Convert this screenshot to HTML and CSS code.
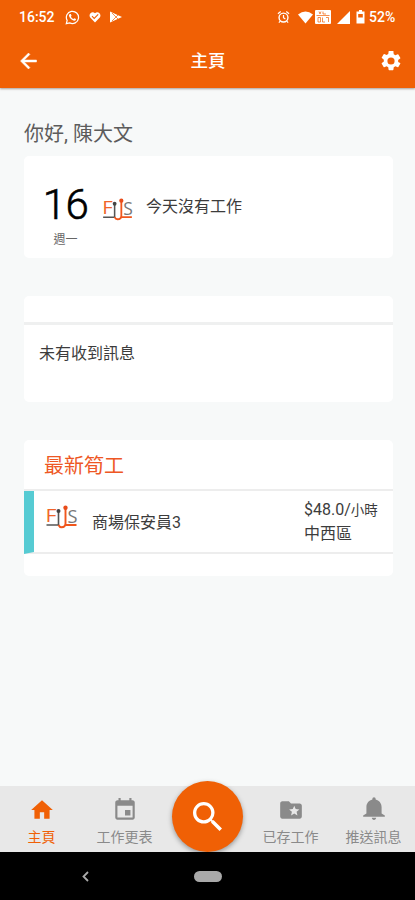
FILE: index.html
```html
<!DOCTYPE html>
<html lang="zh-Hant">
<head>
<meta charset="utf-8">
<meta name="viewport" content="width=device-width, initial-scale=1">
<title>主頁</title>
<link rel="stylesheet" href="styles.css">
</head>
<body>
<div class="screen">
  <header class="top">
    <div class="status">
      <span class="time">16:52</span>
      <svg class="whatsapp" viewBox="0 0 16 16"><path d="M1.4 14.6l.9-3.5A6.5 6.5 0 1 1 5 13.7z" fill="none" stroke="#fff" stroke-width="1.3"/><path d="M5.2 4.3l1 0 .8 1.9-.7.9q.9 1.7 2.7 2.5l.9-.9 1.9.9q0 1.6-1.7 1.8C7.500 11.500 4.300 8 4.200 5.900q.1-1.200 1-1.600z" fill="#fff"/></svg>
      <svg class="heart" viewBox="0 0 12 12"><path d="M6 11.500L1.200 6.400C-1 3.500 3-.7 6 2.200C9-.7 13 3.500 10.800 6.400z" fill="#fff"/><path d="M3 5.200l2.200 2.200 4-4" fill="none" stroke="#f06005" stroke-width="1.100"/></svg>
      <svg class="play" viewBox="0 0 12 12"><path d="M0 .5L12 6 0 11.500z" fill="#fff"/><path d="M2 2l6 6M2 10l6-6" stroke="#f06005" stroke-width=".7"/></svg>
      <span class="spacer"></span>
      <svg class="alarm" viewBox="0 0 14 14"><circle cx="7" cy="7.600" r="4.800" fill="none" stroke="#fff" stroke-width="1.500"/><path d="M1 3.500l3-2.500M13 3.500L10 1M7 4.800v3l2 1.400M3.500 11.500L2 13M10.500 11.500L12 13" fill="none" stroke="#fff" stroke-width="1.300"/></svg>
      <svg class="wifi" viewBox="0 0 15 13"><path d="M7.500 12.500L0 3.500Q7.500-2.500 15 3.500z" fill="#fff"/></svg>
      <svg class="volte" viewBox="0 0 16 14"><rect width="16" height="14" rx="1" fill="#fff"/><path d="M4 1.500l1 2.500L6 1.500M8 1.500v2.500h3M1.500 5.500h13M3 7.500v4.500h2.500V7.500zM7.500 7.500v4.500h2.500M11 7.500h2.500v4.500" fill="none" stroke="#f06005" stroke-width=".7"/></svg>
      <svg class="signal" viewBox="0 0 13 13"><path d="M13 0V13H0z" fill="#fff"/></svg>
      <svg class="battery" viewBox="0 0 9 14"><path d="M3 0h3v1.500h2.500v12H.5v-12H3z" fill="#fff"/><path d="M2.200 4h4.600v3.500H2.200z" fill="#f06005"/></svg>
      <span class="percent">52%</span>
    </div>
    <div class="bar">
      <svg class="back" viewBox="4 4 16 16"><path d="M20 11H7.830l5.590-5.590L12 4l-8 8 8 8 1.410-1.410L7.830 13H20z" fill="#fff" stroke="#fff" stroke-width=".5"/></svg>
      <h1>主頁</h1>
      <svg class="gear" viewBox="2 2 20 20"><path fill="#fff" d="M19.140 12.940c.04-.3.06-.61.06-.94s-.02-.64-.07-.94l2.030-1.580a.49.490 0 0 0 .12-.61l-1.920-3.320a.488.488 0 0 0-.59-.22l-2.390.96c-.5-.38-1.030-.7-1.620-.94l-.36-2.540A.484.484 0 0 0 13.920 2h-3.840c-.24 0-.43.170-.47.410l-.36 2.540c-.59.240-1.130.570-1.620.94l-2.390-.96a.488.488 0 0 0-.59.220L2.740 8.470a.48.480 0 0 0 .12.610l2.030 1.580c-.05.3-.09.630-.09.940s.02.640.07.940l-2.030 1.580a.49.490 0 0 0-.12.610l1.920 3.320c.12.220.370.290.59.220l2.390-.96c.5.380 1.030.7 1.620.94l.36 2.540c.05.240.24.410.48.410h3.840c.24 0 .44-.17.47-.41l.36-2.540c.59-.24 1.130-.56 1.620-.94l2.390.96c.22.080.47 0 .59-.22l1.920-3.320a.48.480 0 0 0-.12-.61zM12 15.600A3.600 3.600 0 1 1 12 8.400a3.600 3.600 0 0 1 0 7.200z"/></svg>
    </div>
  </header>

  <main>
    <p class="greeting">你好, 陳大文</p>
    <section class="card today">
      <div class="date"><span class="day">16</span><span class="weekday">週一</span></div>
      <svg class="logo" viewBox="0 0 32 24">
        <text x="0" y="17" font-size="18" textLength="11" lengthAdjust="spacingAndGlyphs" class="logo-f">F</text>
        <text x="22" y="17.500" font-size="18" textLength="10" lengthAdjust="spacingAndGlyphs" class="logo-s">S</text>
        <path d="M1 20H13V6" class="logo-dark"/><circle cx="13" cy="6" r="2" fill="#444"/>
        <path d="M13 20q1 2.200 3 2.200q4 0 4-4V3M20 20h11" class="logo-hook"/><circle cx="20" cy="2.800" r="2.200" fill="#e84c1a"/>
      </svg>
      <p>今天沒有工作</p>
    </section>
    <section class="card messages">
      <div class="messages-head"></div>
      <p>未有收到訊息</p>
    </section>
    <section class="card jobs">
      <h2>最新筍工</h2>
      <div class="job">
        <svg class="stripe" viewBox="0 0 10 63" preserveAspectRatio="none"><path d="M0 0H10V61L0 63z" fill="#56cbd3"/></svg>
        <svg class="logo" viewBox="0 0 32 24">
          <text x="0" y="17" font-size="18" textLength="11" lengthAdjust="spacingAndGlyphs" class="logo-f">F</text>
          <text x="22" y="17.500" font-size="18" textLength="10" lengthAdjust="spacingAndGlyphs" class="logo-s">S</text>
          <path d="M1 20H13V6" class="logo-dark"/><circle cx="13" cy="6" r="2" fill="#444"/>
          <path d="M13 20q1 2.200 3 2.200q4 0 4-4V3M20 20h11" class="logo-hook"/><circle cx="20" cy="2.800" r="2.200" fill="#e84c1a"/>
        </svg>
        <span class="job-name">商場保安員3</span>
        <div class="job-meta"><span>$48.0/<small>小時</small></span><span>中西區</span></div>
      </div>
    </section>
  </main>

  <nav class="tabs">
    <a class="tab active"><svg viewBox="0 0 24 24"><path d="M10 20v-6h4v6h5v-8h3L12 3 2 12h3v8z"/></svg><span>主頁</span></a>
    <a class="tab"><svg viewBox="0 0 24 24"><path d="M17 12h-5v5h5v-5zM16 1v2H8V1H6v2H5c-1.110 0-1.990.9-1.990 2L3 19c0 1.100.89 2 2 2h14c1.100 0 2-.9 2-2V5c0-1.100-.9-2-2-2h-1V1h-2zm3 18H5V8h14v11z"/></svg><span>工作更表</span></a>
    <a class="fab"><svg viewBox="3 3 17.500 17.500"><path d="M15.500 14h-.79l-.28-.27A6.471 6.471 0 0 0 16 9.500 6.500 6.500 0 1 0 9.500 16c1.610 0 3.090-.59 4.230-1.570l.27.28v.79l5 4.990L20.490 19l-4.990-5zm-6 0C7.010 14 5 11.990 5 9.500S7.010 5 9.500 5 14 7.010 14 9.500 11.990 14 9.500 14z"/></svg></a>
    <a class="tab"><svg viewBox="0 0 24 24"><path d="M20 6h-8l-2-2H4c-1.100 0-1.990.9-1.990 2L2 18c0 1.100.9 2 2 2h16c1.100 0 2-.9 2-2V8c0-1.100-.9-2-2-2zm-2.060 11L15 15.280 12.060 17l.78-3.330-2.590-2.240 3.410-.29L15 8l1.340 3.140 3.410.29-2.590 2.240.78 3.330z"/></svg><span>已存工作</span></a>
    <a class="tab bell"><svg viewBox="0 0 24 24"><path d="M12 23c1.100 0 2-.9 2-2h-4c0 1.100.9 2 2 2zm7-6v-6c0-3.350-2.360-6.150-5.500-6.830V3.500a1.500 1.500 0 0 0-3 0v.67C7.360 4.850 5 7.650 5 11v6l-3 2v1h20v-1z"/></svg><span>推送訊息</span></a>
  </nav>
  <footer class="system">
    <svg class="sys-back" viewBox="0 0 7 11"><path d="M6 1L1.500 5.500 6 10" fill="none" stroke="#aaa" stroke-width="1.800"/></svg>
    <span class="pill"></span>
    <span></span>
  </footer>
</div>
</body>
</html>
```
FILE: styles.css
```css
* { box-sizing: border-box; margin: 0; }
body { font-family: Roboto, "Noto Sans CJK TC", sans-serif; color: #3c3c3c; background: #f7f9f9; }
svg { display: block; flex: none; }
.screen { width: 415px; height: 900px; display: flex; flex-direction: column; overflow: hidden; }

.top { height: 88px; background: #f06005; color: #fff; box-shadow: 0 1px 2px rgba(90, 70, 60, .5); }
.status { height: 34px; display: flex; align-items: center; padding: 0 18px 0 19px; }
.time, .percent { font-size: 14px; font-weight: 500; line-height: 34px; }
.time { width: 46px; }
.whatsapp { width: 15px; height: 15px; margin-right: 9px; }
.heart { width: 12px; height: 12px; margin-right: 9px; }
.play { width: 12px; height: 12px; }
.spacer { flex: 1; }
.alarm { width: 13px; height: 14px; margin-right: 8px; }
.wifi { width: 15px; height: 13px; margin-right: 2px; }
.volte { width: 16px; height: 14px; margin-right: 6px; }
.signal { width: 13px; height: 13px; margin-right: 6px; }
.battery { width: 9px; height: 14px; margin-right: 4px; }
.percent { width: 28px; }
.bar { height: 54px; display: grid; grid-template-columns: 20px 1fr 20px; align-items: center; padding: 0 14px 0 20px; }
.back { width: 17px; height: 16px; }
.bar h1 { text-align: center; font-size: 17.500px; font-weight: 500; line-height: 26px; padding-right: 5px; }
.gear { width: 20px; height: 20px; }

main { flex: 1; padding: 31px 22px 0 24px; }
.greeting { font-size: 20px; line-height: 30px; color: #5c5c5c; margin-bottom: 7px; }
.card { background: #fff; border-radius: 5px; margin-bottom: 38px; }
.today { height: 102px; display: flex; align-items: flex-start; padding: 24px 19px 0 18px; }
.date { width: 47px; display: flex; flex-direction: column; align-items: center; }
.day { font-size: 42px; line-height: 50px; color: #000; font-weight: 300; letter-spacing: -.5px; -webkit-text-stroke: .6px #000; }
.weekday { font-size: 12px; line-height: 18px; margin: 1px 0 0 0; color: #666; }
.logo { width: 33px; height: 24px; overflow: visible; font-family: "Open Sans", sans-serif; }
.logo-f { fill: #f0642a; }
.logo-s { fill: #777; }
.logo-dark, .logo-hook { fill: none; stroke: #555; stroke-width: 1.600px; }
.logo-hook { stroke: #f0561c; stroke-width: 1.900px; }
.today .logo { margin: 18px 13px 0; width: 31px; height: 23px; }
.today p { font-size: 16px; line-height: 24px; margin-top: 15px; }
.messages { height: 106px; }
.messages-head { height: 29px; border-bottom: 3px solid #eff0f0; }
.messages p { font-size: 16px; line-height: 24px; padding: 17px 15px 0; }
.jobs { height: 136px; }
.jobs h2 { height: 51px; border-bottom: 2px solid #ededed; padding: 11px 20px 0; font-size: 20px; font-weight: 400; line-height: 30px; color: #ee5724; }
.job { height: 63px; display: flex; align-items: flex-start; border-bottom: 2px solid #ededed; }
.stripe { width: 10px; height: 63px; }
.job .logo { margin: 14px 14px 0 11px; }
.job-name { width: 212px; font-size: 16px; line-height: 24px; padding-top: 20px; }
.job-meta { display: flex; flex-direction: column; font-size: 16px; line-height: 23px; padding-top: 7px; white-space: nowrap; }
.job-meta small { font-size: 13.500px; }

.tabs { height: 66px; display: grid; grid-template-columns: repeat(5, 83px); background: #e8e8e8; color: #8a8a8a; }
.tab { display: flex; flex-direction: column; align-items: center; padding-top: 11px; }
.tab svg { width: 26px; height: 26px; fill: currentColor; }
.tab span { font-size: 14px; line-height: 20px; margin-top: 4px; }
.tab.active { color: #f06005; }
.bell svg { margin-top: -2px; }
.bell span { margin-top: 6px; }
.fab { width: 71px; height: 71px; margin: -5px 0 0 6px; border-radius: 50%; background: #f06005; display: grid; place-items: center; box-shadow: 0 2px 5px rgba(0, 0, 0, .35); }
.fab svg { width: 29px; height: 29px; fill: #fff; }
.system { height: 48px; background: #000; display: grid; grid-template-columns: 1fr 28px 1fr; align-items: center; position: relative; }
.sys-back { width: 7px; height: 11px; margin-left: 82px; }
.pill { height: 11px; border-radius: 6px; background: #a9a9a9; }
```
